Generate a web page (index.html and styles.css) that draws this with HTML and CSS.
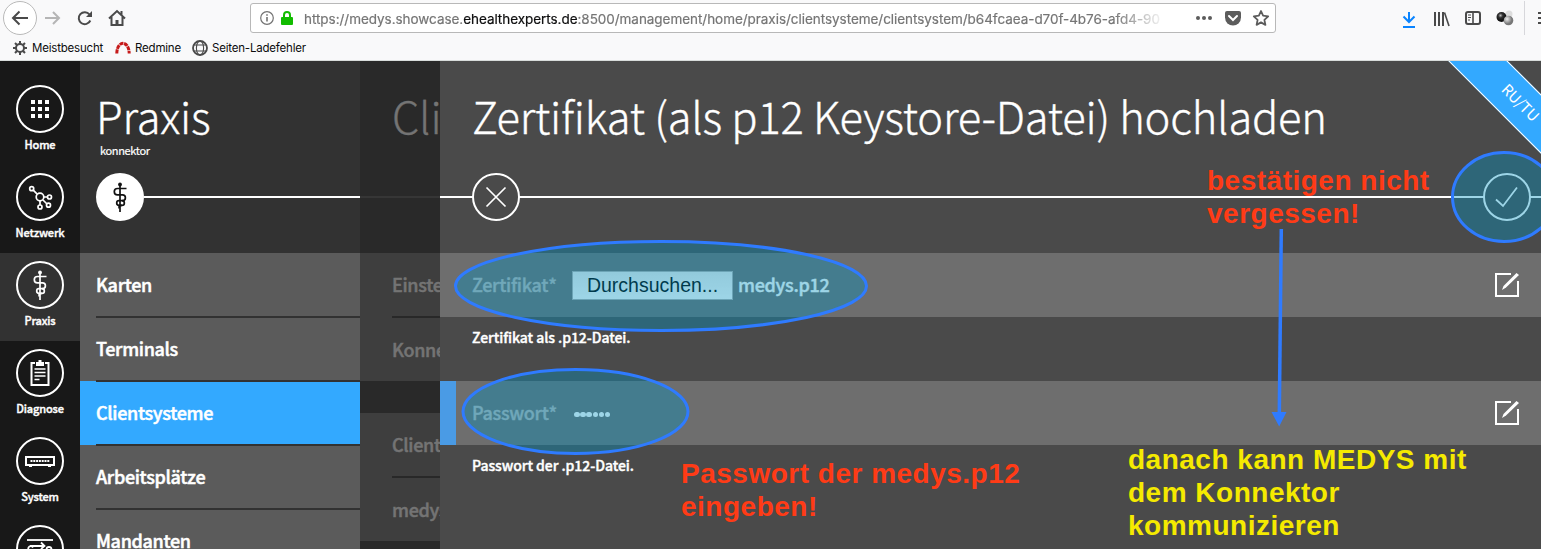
FILE: index.html
```
<!DOCTYPE html>
<html lang="de">
<head>
<meta charset="utf-8">
<title>Clientsystem</title>
<link rel="stylesheet" href="styles.css">
</head>
<body>
<svg class="defs" width="0" height="0">
  <symbol id="staff" viewBox="0 0 48 48">
    <g fill="none" stroke="currentColor" stroke-width="1.700">
      <path d="M24 11v28"/>
      <path d="M30.500 15.500H21.500a3.200 3.200 0 0 0 0 6.400H26.500a2.900 2.900 0 0 1 0 5.800H23a2.200 2.200 0 0 0 0 4.600H26"/>
      <path d="M26 27.700a2.300 2.300 0 0 1 0 4.700h-1.500a1.800 1.800 0 0 0-1 3"/>
    </g>
    <circle cx="24" cy="11.500" r="1.900" fill="currentColor"/>
  </symbol>
  <symbol id="edit" viewBox="0 0 26 26">
    <path d="M17 2H2v22h22V9" fill="none" stroke="currentColor" stroke-width="2"/>
    <path d="M8 18l1.500-4L22.500 1l2.500 2L12 15.500z" fill="currentColor"/>
  </symbol>
</svg>

<header class="browser">
  <div class="toolbar">
    <span class="tool back"><svg width="34" height="34" viewBox="0 0 34 34"><circle cx="17" cy="17" r="16.500" fill="#fff" stroke="#b9b9b9"/><path d="M25 17H10M16.500 10.500L10 17l6.500 6.500" class="ink"/></svg></span>
    <span class="tool"><svg width="32" height="32" viewBox="0 0 32 32"><path d="M8 16h14M16 10l6 6-6 6" class="ink pale"/></svg></span>
    <span class="tool"><svg width="32" height="32" viewBox="0 0 32 32"><path d="M21.300 18.500a6 6 0 1 1-.8-6" class="ink"/><path d="M23 9v6h-6z" fill="#4a4a4a"/></svg></span>
    <span class="tool"><svg width="32" height="32" viewBox="0 0 32 32"><path d="M8 16.500L16 9l8 7.500M10.500 15v8h11v-8M20.500 9v4" class="ink"/><path d="M14.500 18h3v5h-3z" fill="#4a4a4a"/></svg></span>
    <div class="urlbar">
      <svg width="16" height="16" viewBox="0 0 16 16"><circle cx="8" cy="8" r="6.300" fill="none" stroke="#737373" stroke-width="1.200"/><path d="M8 7v4.500M8 4.200v1.600" stroke="#737373" stroke-width="1.600"/></svg>
      <svg class="lock" width="14" height="16" viewBox="0 0 14 16"><path d="M4 7V5a3 3 0 0 1 6 0v2" fill="none" stroke="#12bc00" stroke-width="2"/><rect x="1" y="7" width="12" height="8" rx="1" fill="#12bc00"/></svg>
      <span class="url">https://medys.showcase.<b>ehealthexperts.de</b>:8500/management/home/praxis/clientsysteme/clientsystem/b64fcaea-d70f-4b76-afd4-90</span>
      <svg width="18" height="16" viewBox="0 0 18 16" fill="#5c5c5c"><circle cx="3" cy="8" r="2"/><circle cx="9" cy="8" r="2"/><circle cx="15" cy="8" r="2"/></svg>
      <svg width="18" height="16" viewBox="0 0 18 16"><path d="M3 1h12a2 2 0 0 1 2 2v4.500a8 8 0 0 1-16 0V3a2 2 0 0 1 2-2z" fill="#5c5c5c"/><path d="M5 6l4 4 4-4" fill="none" stroke="#fff" stroke-width="2" stroke-linecap="round"/></svg>
      <svg width="18" height="18" viewBox="0 0 18 18"><path d="M9 2l2.100 4.700 5.100.6-3.800 3.500 1 5.100L9 13.400l-4.400 2.500 1-5.100L1.800 7.300l5.100-.6z" fill="none" stroke="#5c5c5c" stroke-width="1.800" stroke-linejoin="round"/></svg>
    </div>
    <div class="actions">
      <span class="tool"><svg width="32" height="32" viewBox="0 0 32 32"><path d="M16 10v10M10.500 14.500l5.500 5.500 5.500-5.500M10 25h12" fill="none" stroke="#0a84ff" stroke-width="2"/></svg></span>
      <span class="tool"><svg width="32" height="32" viewBox="0 0 32 32"><path d="M10 10v14M14 10v14M18 10v14" stroke="#4a4a4a" stroke-width="2"/><path d="M19.500 10.500L24 24" stroke="#4a4a4a" stroke-width="1.600"/></svg></span>
      <span class="tool"><svg width="32" height="32" viewBox="0 0 32 32"><rect x="9" y="10" width="14" height="12" rx="2" class="ink"/><path d="M16 10v12" stroke="#4a4a4a" stroke-width="1.600"/><path d="M11 13h3M11 15.500h3M11 18h2" stroke="#4a4a4a"/></svg></span>
      <span class="tool"><svg width="32" height="32" viewBox="0 0 32 32"><defs><radialGradient id="ball1" cx=".4" cy=".35"><stop offset="0" stop-color="#bbb"/><stop offset=".45" stop-color="#333"/><stop offset="1" stop-color="#111"/></radialGradient><radialGradient id="ball2" cx=".35" cy=".35"><stop offset="0" stop-color="#eee"/><stop offset="1" stop-color="#777"/></radialGradient></defs><circle cx="20" cy="12" r="3.500" fill="#ddd"/><circle cx="12.500" cy="15" r="5" fill="url(#ball1)"/><circle cx="19.500" cy="18.500" r="4.800" fill="url(#ball2)"/></svg></span>
    </div>
    <span class="divider"></span>
    <svg class="burger" width="3" height="16" viewBox="0 0 3 16"><path d="M0 3h3M0 8h3M0 13h3" stroke="#4a4a4a" stroke-width="2"/></svg>
  </div>
  <nav class="bookmarks">
    <svg width="16" height="16" viewBox="0 0 16 16"><circle cx="8" cy="8" r="4" fill="none" stroke="#4a4a4a" stroke-width="2"/><path d="M8 1v3M8 12v3M1 8h3M12 8h3M3 3l2 2M11 11l2 2M13 3l-2 2M5 11l-2 2" stroke="#4a4a4a" stroke-width="2"/></svg>
    <span class="mark m1">Meistbesucht</span>
    <svg width="16" height="16" viewBox="0 0 16 16"><path d="M1.800 13.500C2 0 14 0 14.200 13.500" fill="none" stroke="#c61a1a" stroke-width="3" stroke-dasharray="4 .7"/></svg>
    <span class="mark m2">Redmine</span>
    <svg width="16" height="16" viewBox="0 0 16 16"><g fill="none" stroke="#4a4a4a" stroke-width="1.100"><circle cx="8" cy="8" r="7" stroke-width="1.800"/><ellipse cx="8" cy="8" rx="3.600" ry="7"/><path d="M2 5h12M2 11h12"/></g></svg>
    <span class="mark m3">Seiten-Ladefehler</span>
  </nav>
</header>

<main class="app">
  <nav class="sidebar">
    <a class="nav-item"><span class="ring"><svg width="44" height="44" viewBox="2 2 44 44" fill="#fff"><path d="M15 15h4v4h-4zM22 15h4v4h-4zM29 15h4v4h-4zM15 22h4v4h-4zM22 22h4v4h-4zM29 22h4v4h-4zM15 29h4v4h-4zM22 29h4v4h-4zM29 29h4v4h-4z"/></svg></span>Home</a>
    <a class="nav-item"><span class="ring"><svg width="44" height="44" viewBox="2 2 44 44" fill="none" stroke="#fff" stroke-width="1.700"><circle cx="24" cy="24" r="3.800"/><circle cx="15.700" cy="15.700" r="2"/><circle cx="33.500" cy="24" r="2"/><circle cx="32.500" cy="32.200" r="2"/><circle cx="24" cy="34" r="2"/><path d="M17.200 17.200l4 4M28 24h3.500M27 27l4 4M24 28v4"/></svg></span>Netzwerk</a>
    <a class="nav-item active"><span class="ring"><svg width="44" height="44" viewBox="2 2 44 44"><use href="#staff" width="48" height="48"/></svg></span>Praxis</a>
    <a class="nav-item"><span class="ring"><svg width="44" height="44" viewBox="2 2 44 44" fill="none" stroke="#fff" stroke-width="2"><path d="M19 14h-3.500v22h17V14H29"/><path d="M20 17v-4h2.500v-2h3v2H28v4z" fill="#fff" stroke="none"/><path d="M18.500 20h11M18.500 23.500h11M18.500 27h11M18.500 30.500h5" stroke-width="1.700"/></svg></span>Diagnose</a>
    <a class="nav-item"><span class="ring"><svg width="44" height="44" viewBox="2 2 44 44" fill="none" stroke="#fff"><path d="M10 20h28v8H10z" stroke-width="2"/><path d="M14.500 24h19" stroke-width="2" stroke-dasharray="2 .8"/><path d="M13 29.500h3M32 29.500h3"/></svg></span>System</a>
    <a class="nav-item"><span class="ring"><svg width="44" height="44" viewBox="2 2 44 44" fill="none" stroke="#fff" stroke-width="1.800"><path d="M11 15h26"/><path d="M14 26a2.500 2.500 0 1 1 3-3.500M14 21h14M25 17.500l3.500 3.500-3.500 3"/><circle cx="33" cy="24.500" r="2.500"/></svg></span></a>
  </nav>

  <section class="panel praxis">
    <h1>Praxis</h1>
    <p class="host">konnektor</p>
    <div class="rule"><span class="badge"><svg width="48" height="48"><use href="#staff" width="48" height="48"/></svg></span></div>
    <ul class="menu">
      <li>Karten</li><li>Terminals</li><li class="selected">Clientsysteme</li><li>Arbeitsplätze</li><li>Mandanten</li>
    </ul>
  </section>

  <section class="panel dimmed">
    <h1>Clientsysteme</h1>
    <div class="rule"></div>
    <ul class="menu"><li>Einstellungen</li><li>Konnektor</li></ul>
    <ul class="menu"><li>Clientsysteme</li><li>medys</li></ul>
  </section>

  <section class="panel form">
    <h1>Zertifikat (als p12 Keystore-Datei) hochladen</h1>
    <div class="rule">
      <span class="ring close"><svg width="44" height="44" viewBox="2 2 44 44"><path d="M14.500 14.500l19 19M33.500 14.500l-19 19" stroke="#fff" stroke-width="1.700"/></svg></span>
      <span class="ring confirm"><svg width="44" height="44" viewBox="2 2 44 44"><path d="M13 26.500l7 6.500 14-18.500" fill="none" stroke="#fff" stroke-width="1.800"/></svg></span>
    </div>
    <div class="field"><label>Zertifikat*</label><button class="browse">Durchsuchen...</button><span class="filename">medys.p12</span><svg class="edit" width="26" height="26"><use href="#edit"/></svg></div>
    <p class="hint">Zertifikat als .p12-Datei.</p>
    <div class="field changed"><label>Passwort*</label><span class="dots"><i></i><i></i><i></i><i></i><i></i><i></i></span><svg class="edit" width="26" height="26"><use href="#edit"/></svg></div>
    <p class="hint">Passwort der .p12-Datei.</p>
    <span class="ribbon">RU/TU</span>
  </section>
</main>

<svg class="marks" width="1541" height="549" viewBox="0 0 1541 549">
  <g fill="#0292c2" fill-opacity=".39" stroke="#2f7bff" stroke-width="3">
    <ellipse cx="661" cy="286" rx="205.500" ry="44.500"/>
    <ellipse cx="575.500" cy="411.500" rx="112.500" ry="42"/>
    <ellipse cx="1504" cy="197" rx="51.500" ry="44.500"/>
  </g>
  <path d="M1281.300 229L1279.300 414" stroke="#2f7bff" stroke-width="3.500"/>
  <path d="M1271.500 412h15l-7.300 14.500z" fill="#2f7bff"/>
</svg>
<p class="note red confirm-note">bestätigen nicht<br>vergessen!</p>
<p class="note red password-note">Passwort der medys.p12<br>eingeben!</p>
<p class="note yellow next-note">danach kann MEDYS mit<br>dem Konnektor<br>kommunizieren</p>
</body>
</html>
```
FILE: styles.css
```
* { box-sizing: border-box; margin: 0; padding: 0; }
body { width: 1541px; height: 549px; overflow: hidden; position: relative; background: #4a4a4a; color: #fff; font-family: "Noto Sans CJK SC", "Noto Sans", sans-serif; }
svg { display: block; flex: none; }
.defs { position: absolute; }
.ink { fill: none; stroke: #4a4a4a; stroke-width: 2; }
.pale { stroke: #b5b5b5; }

.browser { height: 61px; background: #f9f9fa; border-bottom: 1px solid #d8dcdb; font-family: Inter, sans-serif; color: #0c0c0d; }
.toolbar { height: 36px; display: flex; align-items: center; padding-left: 3px; }
.tool { flex: none; display: flex; }
.urlbar { margin-left: 117px; width: 1026px; height: 30px; flex: none; display: flex; align-items: center; background: #fff; border: 1px solid #b8b8b8; border-radius: 3px; padding-left: 8px; }
.lock { margin-left: 5px; }
.url { margin-left: 10px; width: 858px; flex: none; overflow: hidden; white-space: nowrap; font-size: 13.500px; letter-spacing: -.045px; line-height: 22px; padding-top: 1px; color: #757575; -webkit-text-stroke: .2px; -webkit-mask-image: linear-gradient(90deg, #000 810px, transparent 862px); mask-image: linear-gradient(90deg, #000 810px, transparent 862px); }
.url b { font-weight: 400; color: #0c0c0d; }
.url + svg { margin-left: 33px; }
.url + svg + svg { margin-left: 11px; }
.url + svg + svg + svg { margin-left: 10px; }
.actions { display: flex; margin-left: 117px; }
.divider { width: 1px; height: 34px; margin-left: 3px; background: #d7d7db; }
.burger { margin-left: 13px; }
.bookmarks { height: 24px; display: flex; align-items: center; padding-left: 12px; font-size: 11.500px; letter-spacing: -.2px; }
.mark { margin-left: 4px; white-space: nowrap; }
.m1 { width: 83px; }
.m2 { width: 57px; }

.app { height: 488px; display: flex; overflow: hidden; }
.sidebar { width: 80px; flex: none; padding-top: 16px; background: #181818; }
.nav-item { height: 88px; padding-top: 8px; display: flex; flex-direction: column; align-items: center; font-size: 11px; line-height: 23px; font-weight: 500; letter-spacing: -.15px; -webkit-text-stroke: .4px; }
.nav-item.active { background: #323232; }
.ring { width: 48px; height: 48px; flex: none; border: 2px solid #fff; border-radius: 50%; }

.panel { position: relative; flex: none; height: 488px; overflow: hidden; }
.panel h1 { height: 112px; padding-top: 26px; font-size: 43.500px; line-height: 58px; font-weight: 300; letter-spacing: -.23px; white-space: nowrap; -webkit-text-stroke: .35px; }
.rule { height: 48px; margin-bottom: 32px; background: linear-gradient(#fff, #fff) 0 23px / 100% 2px no-repeat; }
.praxis { width: 280px; background: #323232; }
.praxis h1 { height: 80px; padding-left: 16px; }
.host { height: 32px; padding-left: 20px; font-size: 11px; line-height: 19px; letter-spacing: -.35px; -webkit-text-stroke: .2px; }
.praxis .rule { padding-left: 16px; background-position: 64px 23px; }
.badge { display: block; width: 48px; height: 48px; border-radius: 50%; background: #fff; color: #111; }
.menu { list-style: none; background: #5b5b5b; }
.menu li { position: relative; height: 64px; padding-left: 16px; font-size: 18px; line-height: 62px; font-weight: 500; letter-spacing: -.33px; -webkit-text-stroke: .5px; }
.menu li:not(:last-child)::after { content: ""; position: absolute; z-index: 1; left: 16px; right: 0; bottom: -1px; height: 2px; background: #323232; }
.menu .selected { background: #33a9ff; }

.dimmed { width: 80px; background: #292929; color: #747474; }
.dimmed h1 { padding-left: 32px; }
.dimmed .rule { background-image: linear-gradient(#363636, #363636); }
.dimmed .menu { background: #3e3e3e; margin-bottom: 32px; }
.dimmed .menu li { padding-left: 32px; }
.dimmed .menu li:last-child { line-height: 64px; }
.dimmed .menu li:not(:last-child)::after { left: 32px; background: #282828; }

.form { width: 1101px; background: #4a4a4a; }
.form h1 { padding-left: 32px; }
.form .rule { display: flex; justify-content: space-between; padding: 0 10px 0 32px; }
.form .ring { background: #4a4a4a; }
.field { height: 64px; display: flex; align-items: center; padding: 0 21px 0 32px; background: #6e6e6e; font-size: 18px; line-height: 26px; }
.field.changed { background: linear-gradient(90deg, #4a9be5 16px, #6e6e6e 16px); }
.field label { width: 100px; padding-bottom: 2px; color: #b5b5b5; font-weight: 500; letter-spacing: -.3px; -webkit-text-stroke: .4px; }
.browse { width: 161px; height: 29px; border: 1px solid #b0b0b0; background: linear-gradient(#ededed, #fff); color: #000; font: 19.500px "Liberation Sans", sans-serif; }
.filename { margin-left: 5px; padding-bottom: 2px; font-weight: 500; letter-spacing: -.3px; -webkit-text-stroke: .4px; }
.dots { display: flex; padding: 3px 0 0 2px; }
.dots i { width: 5.500px; height: 5.500px; margin-right: .7px; border-radius: 50%; background: #fff; }
.edit { margin-left: auto; }
.hint { height: 64px; padding-left: 32px; font-size: 14px; line-height: 40px; font-weight: 500; letter-spacing: -.05px; -webkit-text-stroke: .4px; }
.ribbon { position: absolute; left: 980px; top: 21px; width: 200px; height: 42px; transform: rotate(45deg); border: 1px solid #fff; background: #33a9ff; text-align: center; font-size: 15px; line-height: 38px; }

.marks { position: absolute; left: 0; top: 0; }
.note { position: absolute; font: 700 28px/33px "Liberation Sans", sans-serif; letter-spacing: .5px; white-space: nowrap; }
.red { color: #ff3b16; }
.yellow { color: #f5ea00; }
.confirm-note { left: 1207px; top: 164px; }
.password-note { left: 681px; top: 457px; }
.next-note { left: 1128px; top: 443px; }
```
